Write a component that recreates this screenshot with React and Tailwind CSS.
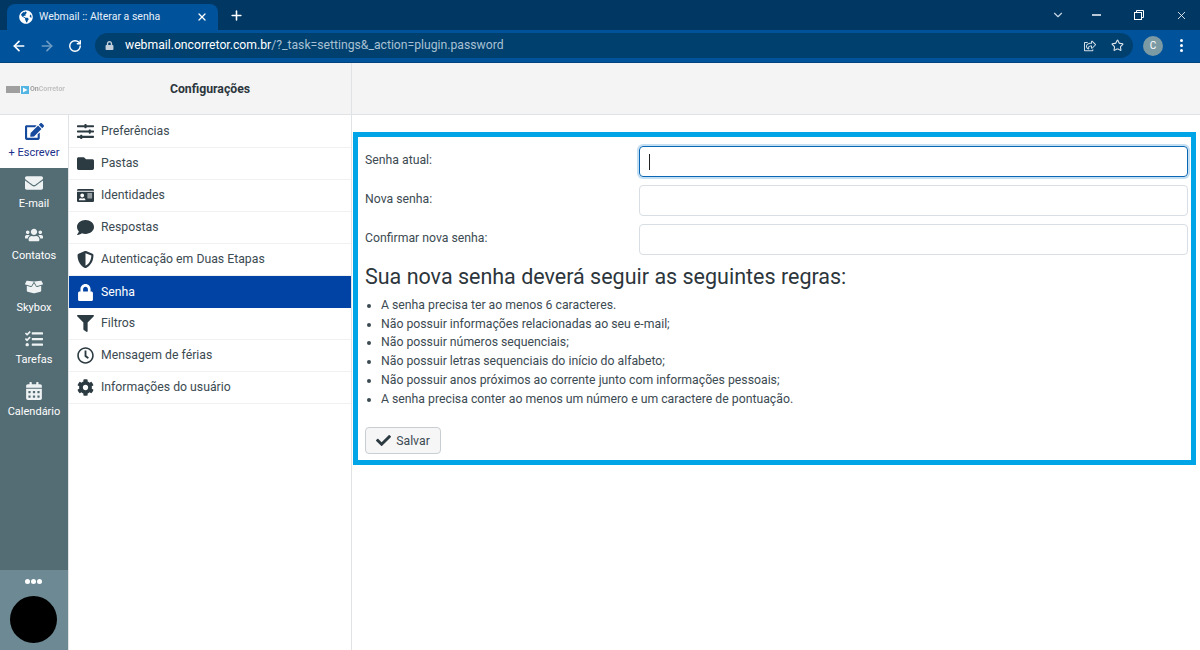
import { ArrowLeft, ArrowRight, RotateCw, Plus, X, Star, ChevronDown } from "lucide-react";
import {
  FaBoxOpen,
  FaCalendarAlt,
  FaCheck,
  FaCog,
  FaComment,
  FaEdit,
  FaEnvelope,
  FaFilter,
  FaFolder,
  FaGlobeAmericas,
  FaIdCard,
  FaLock,
  FaRegClock,
  FaRegShareSquare,
  FaShieldAlt,
  FaSlidersH,
  FaTasks,
  FaUsers,
} from "react-icons/fa";

const navItems = [
  { label: "E-mail", icon: FaEnvelope },
  { label: "Contatos", icon: FaUsers },
  { label: "Skybox", icon: FaBoxOpen },
  { label: "Tarefas", icon: FaTasks },
  { label: "Calendário", icon: FaCalendarAlt },
];

const settings = [
  { label: "Preferências", icon: FaSlidersH },
  { label: "Pastas", icon: FaFolder },
  { label: "Identidades", icon: FaIdCard },
  { label: "Respostas", icon: FaComment },
  { label: "Autenticação em Duas Etapas", icon: FaShieldAlt },
  { label: "Senha", icon: FaLock, active: true },
  { label: "Filtros", icon: FaFilter },
  { label: "Mensagem de férias", icon: FaRegClock },
  { label: "Informações do usuário", icon: FaCog },
];

const rules = [
  "A senha precisa ter ao menos 6 caracteres.",
  "Não possuir informações relacionadas ao seu e-mail;",
  "Não possuir números sequenciais;",
  "Não possuir letras sequenciais do início do alfabeto;",
  "Não possuir anos próximos ao corrente junto com informações pessoais;",
  "A senha precisa conter ao menos um número e um caractere de pontuação.",
];

function BrowserBar() {
  return (
    <div>
      <div className="flex h-[30px] items-end bg-[#003763] pl-[7px]">
        <div className="flex h-[26px] w-[211px] items-center rounded-t-lg bg-[#00529b] pl-3 pr-[10px] text-white">
          <FaGlobeAmericas className="text-[14px]" />
          <span className="ml-[6px] flex-1 text-[10.5px] text-[#e8f0f8]">Webmail :: Alterar a senha</span>
          <X size={12} strokeWidth={2.5} />
        </div>
        <Plus size={15} strokeWidth={2.5} className="mb-[7px] ml-[11px] text-white" />
        <div className="ml-auto flex h-full items-center text-white">
          <ChevronDown size={14} className="mr-[27px] text-[#c4d4e2]" />
          <div className="mr-[33px] h-[1.5px] w-[9px] bg-[#b8c8d6]" />
          <svg width="10" height="10" viewBox="0 0 10 10" fill="none" stroke="white" className="mr-[31px]">
            <rect x="0.5" y="2.5" width="7" height="7" />
            <path d="M2.5 2.5V0.5H9.5V7.5H7.5" />
          </svg>
          <X size={13} strokeWidth={1.5} className="mr-[12px]" />
        </div>
      </div>
      <div className="flex h-[33px] items-center border-b border-[#00437d] bg-[#00529b] pb-[1px]">
        <ArrowLeft size={16} strokeWidth={2.5} className="ml-[11px] text-white" />
        <ArrowRight size={16} strokeWidth={2.5} className="ml-[12px] text-[#6f9cc4]" />
        <RotateCw size={14} strokeWidth={2.5} className="ml-[13px] text-white" />
        <div className="ml-[13px] flex h-[25px] w-[1038px] items-center rounded-full bg-[#00406f] pl-[10px] pr-[7px]">
          <FaLock className="text-[9px] text-[#c2ced8]" />
          <span className="ml-[11px] flex-1 text-[12.2px] text-[#a9c0d3]">
            <span className="text-white">webmail.oncorretor.com.br</span>/?_task=settings&amp;_action=plugin.password
          </span>
          <FaRegShareSquare className="mr-[15px] text-[12px] text-[#d0dce6]" />
          <Star size={13} strokeWidth={2} className="mr-[2px] text-[#e0e8ef]" />
        </div>
        <div className="ml-[10px] flex h-5 w-5 items-center justify-center rounded-full bg-[#7c9aa3] text-[10px] text-white">C</div>
        <div className="ml-[17px] flex flex-col gap-[2px]">
          <span className="h-[3px] w-[3px] rounded-full bg-white" />
          <span className="h-[3px] w-[3px] rounded-full bg-white" />
          <span className="h-[3px] w-[3px] rounded-full bg-white" />
        </div>
      </div>
    </div>
  );
}

function Logo() {
  return (
    <div className="flex w-[68px] items-center pl-[6px] pt-[2px] opacity-80 blur-[0.3px]">
      <div className="h-[7px] w-[14px] bg-[#8a8a8a]" />
      <svg width="8" height="8" viewBox="0 0 8 8" className="ml-[1px]">
        <rect width="8" height="8" fill="#2aa6e0" />
        <path d="M2 1.5L6.5 4L2 6.5Z" fill="white" />
      </svg>
      <span className="ml-[1px] text-[7px] font-bold text-[#b4b4b4]">
        <span className="text-[#8a8a8a]">On</span>Corretor
      </span>
    </div>
  );
}

function Sidebar() {
  return (
    <div className="flex w-[69px] shrink-0 flex-col border-r border-[#dfe3e6] bg-[#546d75] text-[11px] text-white">
      <div className="flex h-[53px] flex-col items-center bg-white pt-[7px] text-[#1a2f8a]">
        <FaEdit className="text-[19px] text-[#164a9c]" />
        <span className="mt-[4px] leading-[16px]">+ Escrever</span>
      </div>
      <div className="flex-1 pt-1">
        {navItems.map((item) => (
          <div key={item.label} className="flex h-[52px] flex-col items-center pt-[2px]">
            <item.icon className="h-[18px] text-[18px] text-[#eef2f3]" />
            <span className="mt-[4px] leading-[16px]">{item.label}</span>
          </div>
        ))}
      </div>
      <div className="flex h-[80px] flex-col items-center bg-[#6d8a94]">
        <div className="mt-[9px] flex gap-[1px] pr-[1px]">
          <span className="h-[5px] w-[5px] rounded-full bg-white" />
          <span className="h-[5px] w-[5px] rounded-full bg-white" />
          <span className="h-[5px] w-[5px] rounded-full bg-white" />
        </div>
        <div className="mr-[2px] mt-[12px] h-[47px] w-[47px] rounded-full bg-black" />
      </div>
    </div>
  );
}

function SettingsMenu() {
  return (
    <div className="w-[283px] shrink-0 border-r border-[#dfe3e6] pt-[1px] text-[12.25px] text-[#3c4a52]">
      {settings.map((item) => (
        <div
          key={item.label}
          className={
            item.active
              ? "flex h-[32px] items-center bg-[#0043a4] text-white"
              : "flex h-[32px] items-center border-b border-[#f0f1f2]"
          }
        >
          <span className={item.active ? "flex w-[32px] justify-center text-white" : "flex w-[32px] justify-center text-[#2c3a42]"}>
            <item.icon className="text-[17px]" />
          </span>
          {item.label}
        </div>
      ))}
    </div>
  );
}

function Field({ label, focused }) {
  return (
    <div className="flex h-[31px] items-center">
      <label className="w-[274px] pb-[3px] text-[12.25px] text-[#3c4a52]">{label}</label>
      {focused ? (
        <div className="flex h-[31px] flex-1 items-center rounded border border-[#0a67b5] pl-[9px] shadow-[0_0_0_2px_#c5dff2]">
          <span className="h-[16px] w-px bg-[#222]" />
        </div>
      ) : (
        <div className="h-[31px] flex-1 rounded border border-[#d8dee3]" />
      )}
    </div>
  );
}

function PasswordForm() {
  return (
    <div className="ml-[1px] mr-[4px] mt-[17px] h-[333px] border-[5px] border-[#00a5e8] pl-[7px] pr-[3px] pt-[9px]">
      <div className="flex flex-col gap-2">
        <Field label="Senha atual:" focused />
        <Field label="Nova senha:" />
        <Field label="Confirmar nova senha:" />
      </div>
      <h2 className="mt-[8px] text-[21.5px] leading-[28px] text-[#2c363c]">Sua nova senha deverá seguir as seguintes regras:</h2>
      <ul className="mt-[5px] list-disc pl-4 text-[12.25px] leading-[18.7px] text-[#3c4a52]">
        {rules.map((rule) => (
          <li key={rule}>{rule}</li>
        ))}
      </ul>
      <button className="mt-[19px] flex h-[27px] w-[76px] items-center justify-center rounded border border-[#c9ced2] bg-[#f6f6f6] text-[12.25px] text-[#3c4a52]">
        <FaCheck className="mr-[5px] text-[15px] text-[#2c3a42]" />
        Salvar
      </button>
    </div>
  );
}

export default function App() {
  return (
    <div className="flex h-[650px] w-[1200px] flex-col overflow-hidden bg-white font-['Roboto',sans-serif]">
      <BrowserBar />
      <div className="flex h-[52px] shrink-0 border-b border-[#dfe3e6] bg-[#f4f4f4]">
        <Logo />
        <div className="flex w-[284px] items-center justify-center border-r border-[#dfe3e6] pl-[1px] pt-[1px] text-[12.25px] font-bold text-[#2c363c]">
          Configurações
        </div>
      </div>
      <div className="flex flex-1">
        <Sidebar />
        <SettingsMenu />
        <div className="flex-1">
          <PasswordForm />
        </div>
      </div>
    </div>
  );
}
